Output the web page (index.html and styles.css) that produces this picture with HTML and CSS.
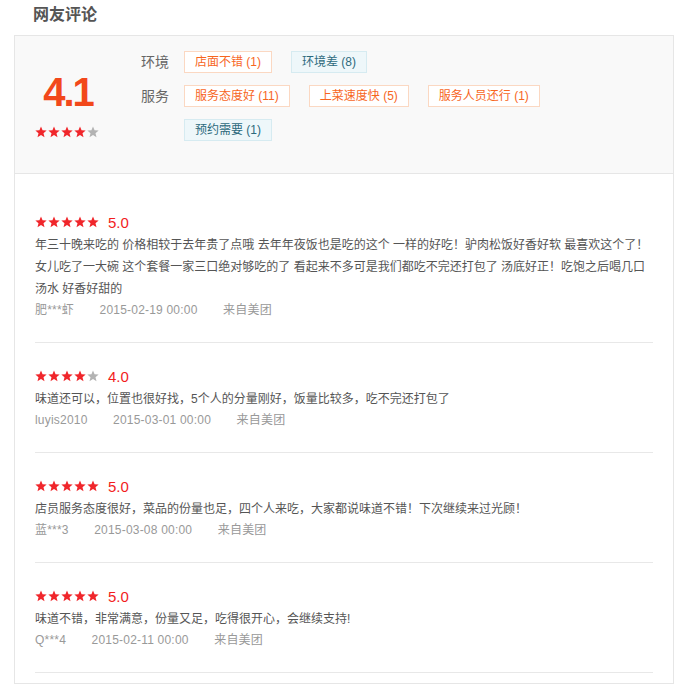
FILE: index.html
```html
<!DOCTYPE html>
<html lang="zh-CN">
  <head>
    <meta charset="UTF-8">
    <meta name="viewport" content="width=device-width, initial-scale=1.0">
    <title>网友评论</title>
    <link rel="stylesheet" href="styles.css">
  </head>
  <body>
    <!-- star shape used by every rating -->
    <svg class="defs" aria-hidden="true">
      <symbol id="star" viewBox="0 0 24 24">
        <polygon points="12,0.8 15.1,8.4 23.3,9 17,14.3 19,22.4 12,18 5,22.4 7,14.3 0.7,9 8.9,8.4" fill="currentColor"></polygon>
      </symbol>
    </svg>

    <div class="comments">
      <h2 class="comments-title">网友评论</h2>

      <div class="comments-box">
        <div class="summary">
          <div class="summary-score">
            <div class="score-num">4.1</div>
            <div class="stars">
              <svg class="star on"><use href="#star"></use></svg>
              <svg class="star on"><use href="#star"></use></svg>
              <svg class="star on"><use href="#star"></use></svg>
              <svg class="star on"><use href="#star"></use></svg>
              <svg class="star"><use href="#star"></use></svg>
            </div>
          </div>

          <div class="summary-tags">
            <div class="tag-row">
              <span class="tag-label">环境</span>
              <div class="tag-list">
                <span class="tag good">店面不错 (1)</span>
                <span class="tag bad">环境差 (8)</span>
              </div>
            </div>
            <div class="tag-row">
              <span class="tag-label">服务</span>
              <div class="tag-list">
                <span class="tag good">服务态度好 (11)</span>
                <span class="tag good">上菜速度快 (5)</span>
                <span class="tag good">服务人员还行 (1)</span>
                <span class="tag bad">预约需要 (1)</span>
              </div>
            </div>
          </div>
        </div>

        <ul class="review-list">
          <li class="review">
            <div class="review-rate">
              <div class="stars">
                <svg class="star on"><use href="#star"></use></svg>
                <svg class="star on"><use href="#star"></use></svg>
                <svg class="star on"><use href="#star"></use></svg>
                <svg class="star on"><use href="#star"></use></svg>
                <svg class="star on"><use href="#star"></use></svg>
              </div>
              <span class="review-score">5.0</span>
            </div>
            <p class="review-text">年三十晚来吃的 价格相较于去年贵了点哦 去年年夜饭也是吃的这个 一样的好吃！驴肉松饭好香好软 最喜欢这个了！女儿吃了一大碗 这个套餐一家三口绝对够吃的了 看起来不多可是我们都吃不完还打包了 汤底好正！吃饱之后喝几口汤水 好香好甜的</p>
            <div class="review-meta">
              <span>肥***虾</span>
              <span>2015-02-19 00:00</span>
              <span>来自美团</span>
            </div>
          </li>

          <li class="review">
            <div class="review-rate">
              <div class="stars">
                <svg class="star on"><use href="#star"></use></svg>
                <svg class="star on"><use href="#star"></use></svg>
                <svg class="star on"><use href="#star"></use></svg>
                <svg class="star on"><use href="#star"></use></svg>
                <svg class="star"><use href="#star"></use></svg>
              </div>
              <span class="review-score">4.0</span>
            </div>
            <p class="review-text">味道还可以，位置也很好找，5个人的分量刚好，饭量比较多，吃不完还打包了</p>
            <div class="review-meta">
              <span>luyis2010</span>
              <span>2015-03-01 00:00</span>
              <span>来自美团</span>
            </div>
          </li>

          <li class="review">
            <div class="review-rate">
              <div class="stars">
                <svg class="star on"><use href="#star"></use></svg>
                <svg class="star on"><use href="#star"></use></svg>
                <svg class="star on"><use href="#star"></use></svg>
                <svg class="star on"><use href="#star"></use></svg>
                <svg class="star on"><use href="#star"></use></svg>
              </div>
              <span class="review-score">5.0</span>
            </div>
            <p class="review-text">店员服务态度很好，菜品的份量也足，四个人来吃，大家都说味道不错！下次继续来过光顾！</p>
            <div class="review-meta">
              <span>蓝***3</span>
              <span>2015-03-08 00:00</span>
              <span>来自美团</span>
            </div>
          </li>

          <li class="review">
            <div class="review-rate">
              <div class="stars">
                <svg class="star on"><use href="#star"></use></svg>
                <svg class="star on"><use href="#star"></use></svg>
                <svg class="star on"><use href="#star"></use></svg>
                <svg class="star on"><use href="#star"></use></svg>
                <svg class="star on"><use href="#star"></use></svg>
              </div>
              <span class="review-score">5.0</span>
            </div>
            <p class="review-text">味道不错，非常满意，份量又足，吃得很开心，会继续支持!</p>
            <div class="review-meta">
              <span>Q***4</span>
              <span>2015-02-11 00:00</span>
              <span>来自美团</span>
            </div>
          </li>
        </ul>
      </div>
    </div>
  </body>
</html>
```

FILE: styles.css
```css
body {
  margin: 0;
  font-family: "Liberation Sans", "Noto Sans CJK SC", sans-serif;
  color: #555;
  background: #fff;
}

.defs {
  display: none;
}

.comments {
  padding: 0 14px;
}

.comments-title {
  margin: 0 0 5px;
  padding-left: 19px;
  font-size: 16px;
  line-height: 30px;
  font-weight: bold;
  color: #555;
}

.comments-box {
  border: 1px solid #e6e6e6;
}

/* summary block */
.summary {
  display: flex;
  align-items: flex-start;
  padding: 15px 0 32px 20px;
  background-color: #f9f9f9;
  border-bottom: 1px solid #e6e6e6;
}

.summary-score {
  width: 64px;
  display: flex;
  flex-direction: column;
  align-items: center;
  padding-top: 21px;
}

.score-num {
  font-size: 40px;
  line-height: 40px;
  font-weight: bold;
  letter-spacing: -2px;
  margin-right: -2px;
  color: #f2481b;
}

.summary-score .stars {
  margin-top: 14px;
}

.summary-tags {
  margin-left: 42px;
  display: flex;
  flex-direction: column;
  gap: 12px;
}

.tag-row {
  display: flex;
  align-items: flex-start;
}

.tag-label {
  width: 43px;
  flex-shrink: 0;
  font-size: 14px;
  line-height: 22px;
  color: #666;
}

.tag-list {
  width: 420px;
  display: flex;
  flex-wrap: wrap;
  gap: 12px 19px;
}

.tag {
  padding: 0 10px;
  font-size: 12px;
  line-height: 20px;
  border: 1px solid;
  white-space: nowrap;
}

.tag.good {
  color: #f7661e;
  border-color: #fbd8c2;
  background-color: #fff;
}

.tag.bad {
  color: #2d6a7d;
  border-color: #d6ebf1;
  background-color: #eef7fa;
}

/* stars */
.stars {
  display: flex;
  gap: 1px;
}

.star {
  width: 12px;
  height: 12px;
  color: #b3b3b3;
}

.star.on {
  color: #f0262b;
}

/* reviews */
.review-list {
  list-style: none;
  margin: 0;
  padding: 15px 20px 10px;
}

.review {
  padding: 23px 0 22px;
  border-bottom: 1px solid #e8e8e8;
}

.review-rate {
  display: flex;
  align-items: center;
  height: 20px;
}

.review-score {
  margin-left: 9px;
  font-size: 15px;
  color: #f21d1d;
}

.review-text {
  margin: 2px 0 0;
  font-size: 12px;
  line-height: 22px;
  color: #555;
}

.review-meta {
  font-size: 12px;
  line-height: 20px;
  letter-spacing: 0.2px;
  color: #999;
}

.review-meta span {
  margin-right: 22px;
}
```
